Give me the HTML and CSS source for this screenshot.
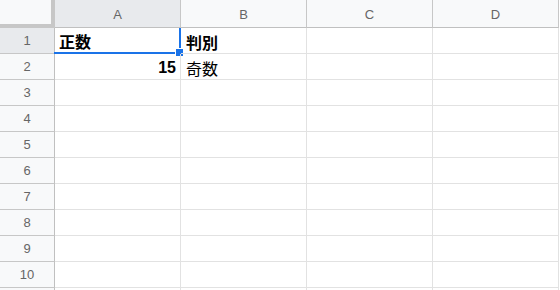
FILE: index.html
```html
<!DOCTYPE html>
<html lang="ja">
<head>
    <meta charset="UTF-8">
    <meta name="viewport" content="width=device-width, initial-scale=1.0">
    <title>シート</title>
    <link rel="stylesheet" href="styles.css">
</head>
<body>
    <div id="sheet">
        <div class="corner"></div>
        <div class="col-head active">A</div>
        <div class="col-head">B</div>
        <div class="col-head">C</div>
        <div class="col-head">D</div>

        <div class="row-head active">1</div>
        <div class="cell bold selected">正数<span class="handle"></span></div>
        <div class="cell bold">判別</div>
        <div class="cell"></div>
        <div class="cell"></div>

        <div class="row-head">2</div>
        <div class="cell bold num">15</div>
        <div class="cell">奇数</div>
        <div class="cell"></div>
        <div class="cell"></div>

        <div class="row-head">3</div>
        <div class="cell"></div><div class="cell"></div><div class="cell"></div><div class="cell"></div>
        <div class="row-head">4</div>
        <div class="cell"></div><div class="cell"></div><div class="cell"></div><div class="cell"></div>
        <div class="row-head">5</div>
        <div class="cell"></div><div class="cell"></div><div class="cell"></div><div class="cell"></div>
        <div class="row-head">6</div>
        <div class="cell"></div><div class="cell"></div><div class="cell"></div><div class="cell"></div>
        <div class="row-head">7</div>
        <div class="cell"></div><div class="cell"></div><div class="cell"></div><div class="cell"></div>
        <div class="row-head">8</div>
        <div class="cell"></div><div class="cell"></div><div class="cell"></div><div class="cell"></div>
        <div class="row-head">9</div>
        <div class="cell"></div><div class="cell"></div><div class="cell"></div><div class="cell"></div>
        <div class="row-head">10</div>
        <div class="cell"></div><div class="cell"></div><div class="cell"></div><div class="cell"></div>
        <div class="row-head"></div>
        <div class="cell"></div><div class="cell"></div><div class="cell"></div><div class="cell"></div>
    </div>
</body>
</html>
```

FILE: styles.css
```css
body, html {
    margin: 0;
    padding: 0;
    height: 290px;
    overflow: hidden;
    background-color: #ffffff;
    font-family: "Liberation Sans", "Noto Sans CJK JP", sans-serif;
}
#sheet {
    display: grid;
    grid-template-columns: 55px repeat(4, 126px);
    grid-template-rows: 28px repeat(11, 26px);
}
.corner {
    background-color: #f8f9fa;
    border-right: 4px solid #c7c7c7;
    border-bottom: 4px solid #c7c7c7;
}
.col-head {
    display: flex;
    justify-content: center;
    align-items: center;
    padding-top: 1px;
    font-size: 13px;
    color: #666666;
    background-color: #f8f9fa;
    border-right: 1px solid #c7c7c7;
    border-bottom: 1px solid #c0c0c0;
}
.row-head {
    display: flex;
    justify-content: center;
    align-items: center;
    font-size: 13px;
    color: #666666;
    background-color: #f8f9fa;
    border-right: 1px solid #c0c0c0;
    border-bottom: 1px solid #c7c7c7;
}
.active {
    background-color: #e8eaed;
}
.cell {
    position: relative;
    display: flex;
    align-items: center;
    padding: 2px 4px 0 5px;
    font-size: 16px;
    color: #000000;
    border-right: 1px solid #e2e2e2;
    border-bottom: 1px solid #e2e2e2;
}
.bold {
    font-weight: bold;
}
.num {
    justify-content: flex-end;
}
.selected {
    border-right: 2px solid #1a73e8;
    border-bottom: 2px solid #1a73e8;
    margin-left: -1px;
}
.handle {
    position: absolute;
    right: -5px;
    bottom: -5px;
    width: 7px;
    height: 7px;
    background-color: #1a73e8;
    border: 1px solid #ffffff;
}
```
